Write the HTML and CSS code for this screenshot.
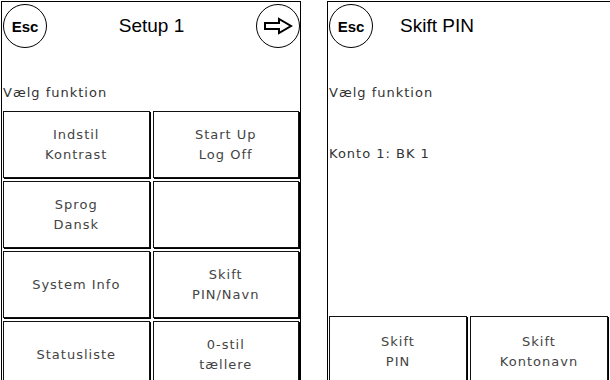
FILE: index.html
```html
<!DOCTYPE html>
<html>
<head>
<meta charset="utf-8">
<link rel="stylesheet" href="styles.css">
</head>
<body>
<div class="screen">
  <section class="panel left">
    <header class="head">
      <div class="circle esc">Esc</div>
      <div class="title">Setup 1</div>
      <div class="circle next">
        <svg width="30" height="18" viewBox="0 0 30 18"><path d="M2 6 H16 V2 L28 9 L16 16 V12 H2 Z" fill="#fff" stroke="#000" stroke-width="2" stroke-linejoin="miter"/></svg>
      </div>
    </header>
    <div class="label">Vælg funktion</div>
    <div class="grid">
      <div class="btn">Indstil<br>Kontrast</div>
      <div class="btn">Start Up<br>Log Off</div>
      <div class="btn">Sprog<br>Dansk</div>
      <div class="btn"></div>
      <div class="btn">System Info</div>
      <div class="btn">Skift<br>PIN/Navn</div>
      <div class="btn">Statusliste</div>
      <div class="btn">0-stil<br>tællere</div>
    </div>
  </section>
  <section class="panel right">
    <header class="head head-left">
      <div class="circle esc">Esc</div>
      <div class="title">Skift PIN</div>
    </header>
    <div class="label">Vælg funktion</div>
    <div class="label konto">Konto 1: BK 1</div>
    <div class="bottom">
      <div class="btn">Skift<br>PIN</div>
      <div class="btn">Skift<br>Kontonavn</div>
    </div>
  </section>
</div>
</body>
</html>
```
FILE: styles.css
```css
html, body {
  margin: 0;
  padding: 0;
  background: #fff;
  width: 610px;
  height: 380px;
  overflow: hidden;
}
.screen {
  display: flex;
  gap: 26px;
  padding: 1px 0 0 1px;
  font-family: "DejaVu Sans", Verdana, sans-serif;
  color: #222;
}
.panel {
  border: 1px solid #000;
  border-bottom: none;
  height: 379px;
  overflow: hidden;
  box-sizing: border-box;
  display: flex;
  flex-direction: column;
}
.left { width: 300px; }
.right { width: 283px; border-right: none; }
.head {
  height: 48px;
  display: flex;
  align-items: center;
  justify-content: space-between;
  padding: 0 0 0 1px;
  flex: none;
}
.head-left { justify-content: flex-start; gap: 27px; }
.circle {
  width: 42px;
  height: 42px;
  border: 1.6px solid #000;
  border-radius: 50%;
  display: flex;
  align-items: center;
  justify-content: center;
  box-sizing: content-box;
}
.esc {
  font-family: "Liberation Sans", Arial, sans-serif;
  font-weight: bold;
  font-size: 15px;
  color: #000;
}
.title {
  font-family: "Liberation Sans", Arial, sans-serif;
  font-size: 19px;
  color: #000;
}
.label {
  font-size: 13px;
  letter-spacing: 1px;
  margin-top: 36px;
  height: 14px;
  line-height: 14px;
  padding-left: 1px;
  color: #333;
  flex: none;
}
.konto { margin-top: 47px; }
.grid {
  margin-top: 11px;
  display: grid;
  grid-template-columns: 1fr 1fr;
  grid-auto-rows: 67px;
  gap: 3px 3px;
  padding: 0 1px 0 1px;
  flex: none;
}
.btn {
  border: 1px solid #111;
  box-shadow: 1px 1px 0 #000;
  display: flex;
  align-items: center;
  justify-content: center;
  text-align: center;
  font-size: 13px;
  line-height: 20px;
  letter-spacing: 1px;
  color: #444;
  background: #fff;
}
.bottom {
  margin-top: 155px;
  display: grid;
  grid-template-columns: 1fr 1fr;
  grid-auto-rows: 72px;
  gap: 3px;
  padding: 0 2px 0 1px;
  flex: none;
}
```
